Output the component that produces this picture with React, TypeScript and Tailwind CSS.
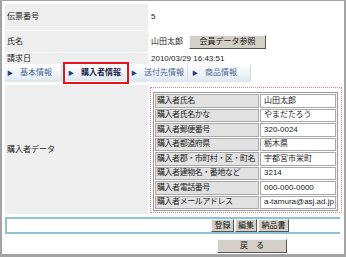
import React from "react";

const buyer = [
  ["購入者氏名", "山田太郎"],
  ["購入者氏名かな", "やまだたろう"],
  ["購入者郵便番号", "320-0024"],
  ["購入者都道府県", "栃木県"],
  ["購入者郡・市町村・区・町名", "宇都宮市栄町"],
  ["購入者建物名・番地など", "3214"],
  ["購入者電話番号", "000-000-0000"],
  ["購入者メールアドレス", "a-tamura@asj.ad.jp"],
];

function Btn({ children, className = "" }: any) {
  return (
    <div
      className={`flex items-center justify-center bg-[#d4d0c8] border border-t-[#f4f4f4] border-l-[#f4f4f4] border-r-[#555] border-b-[#555] text-[#111] ${className}`}
    >
      {children}
    </div>
  );
}

function Tab({ label, active = false, className = "" }: any) {
  return (
    <div
      className={`flex items-center h-full bg-gradient-to-b from-white to-[#dde7f1] border-r border-[#d5dce4] ${className}`}
    >
      <span className="text-[#1f3f7a] text-[6px] leading-none ml-[2px] mr-[7px]">▶</span>
      <span className={active ? "font-bold text-[#1a2550]" : "text-[#4a6592]"}>{label}</span>
    </div>
  );
}

export default function App() {
  return (
    <div className="w-[346px] h-[257px] overflow-hidden bg-white border-t border-l-2 border-r-2 border-b-[3px] border-[#a3a3a3] pl-[3px] pt-[3px] pr-[2px] text-[8px] leading-none text-[#222] font-['Liberation_Sans','Noto_Sans_CJK_JP',sans-serif]">
      {/* header rows */}
      <div className="flex h-[26px]">
        <div className="w-[143px] bg-[#eeeeee] pl-[2px] flex items-center">伝票番号</div>
        <div className="ml-[3px] flex items-center">5</div>
      </div>
      <div className="flex h-[21px] mt-[1px]">
        <div className="w-[143px] bg-[#eeeeee] pl-[2px] flex items-center">氏名</div>
        <div className="ml-[3px] flex items-center gap-[6px]">
          山田太郎
          <Btn className="w-[77px] h-[14px]">会員データ参照</Btn>
        </div>
      </div>
      <div className="flex h-[11px] mt-[1px]">
        <div className="w-[143px] bg-[#eeeeee] pl-[2px] flex items-center">請求日</div>
        <div className="ml-[3px] flex items-center">2010/03/29 16:43:51</div>
      </div>

      {/* tabs */}
      <div className="flex items-center h-[22px] mt-[-2px]">
        <div className="flex items-center h-[17px]">
          <Tab label="基本情報" className="w-[57px]" />
          <div className="w-[66px] h-[22px] border-2 border-[#e8101a] ml-[1px] p-[1px] flex">
            <Tab label="購入者情報" active className="w-full border-r-0" />
          </div>
          <Tab label="送付先情報" className="w-[59px]" />
          <Tab label="商品情報" className="w-[63px] pl-[2px]" />
        </div>
      </div>

      {/* buyer data */}
      <div className="flex h-[129px] mt-[1px]">
        <div className="w-[143px] bg-[#eeeeee] pl-[2px] flex items-center">購入者データ</div>
        <div className="ml-[2px] mt-[2px] w-[192px] h-[126px] border border-dotted border-[#ef7f86] pl-[2px] pt-[4px] pr-[3px]">
          <div className="border border-[#9a9a9a] p-[1px] flex flex-col gap-[1px]">
            {buyer.map(([k, v]) => (
              <div key={k} className="flex gap-[1px] h-[13.5px]">
                <div className="w-[104px] bg-[#e2e2e2] border border-[#a8a8a8] pl-[1px] flex items-center whitespace-nowrap overflow-hidden tracking-[-0.45px]">
                  {k}
                </div>
                <div className="flex-1 border border-[#a8a8a8] pl-[3px] flex items-center whitespace-nowrap">
                  {v}
                </div>
              </div>
            ))}
          </div>
        </div>
      </div>

      {/* action buttons */}
      <div className="mt-[3px] h-[17px] border-2 border-[#8fc3d6] border-r-0 flex items-center w-[335px]">
        <div className="flex ml-[204px] gap-[1px]">
          <Btn className="w-[23px] h-[13px]">登録</Btn>
          <Btn className="w-[22px] h-[13px]">編集</Btn>
          <Btn className="w-[31px] h-[13px]">納品書</Btn>
        </div>
      </div>
      <div className="flex mt-[5px]">
        <Btn className="ml-[212px] w-[70px] h-[14px]">戻　る</Btn>
      </div>
    </div>
  );
}
